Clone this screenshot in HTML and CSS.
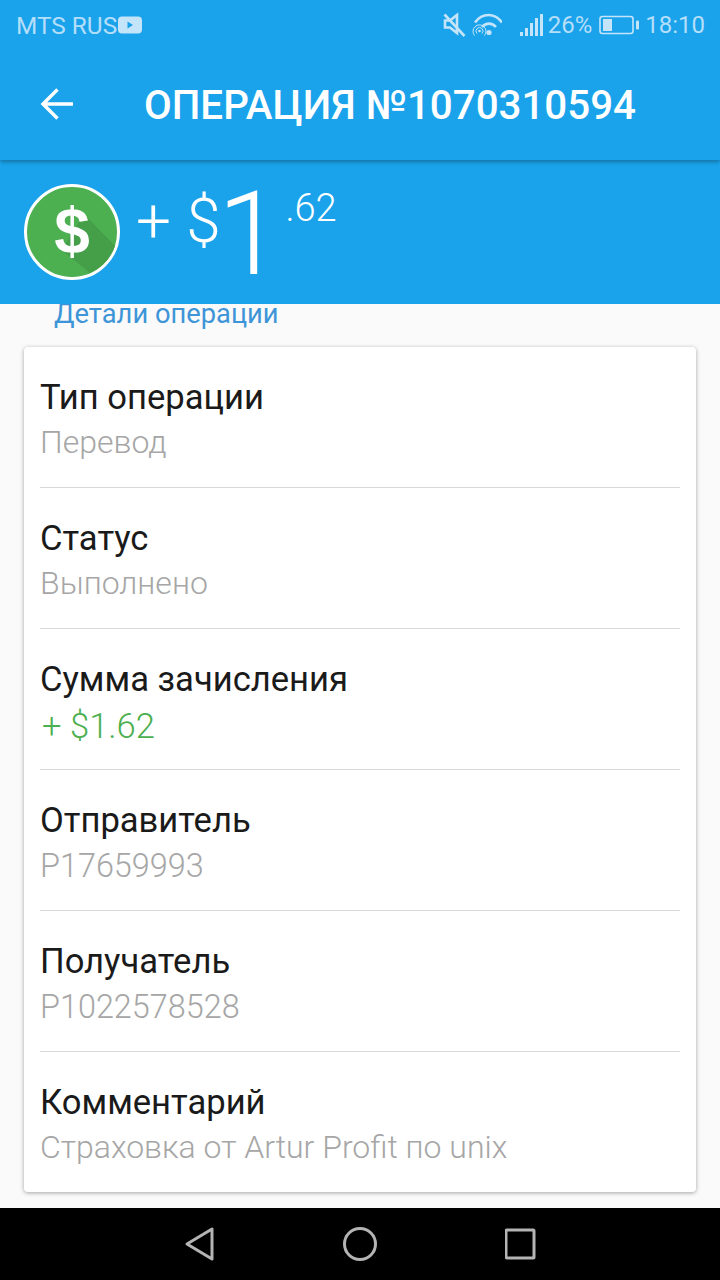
FILE: index.html
```html
<!DOCTYPE html>
<html lang="ru">
<head>
<meta charset="utf-8">
<title>Операция</title>
<link rel="stylesheet" href="styles.css">
</head>
<body>
<div class="screen">
  <header class="top">
    <div class="status">
      <div class="status-left">
        <span>MTS RUS</span>
        <svg class="yt" width="24" height="18" viewBox="0 0 24 18"><rect width="24" height="17" y="0.5" rx="4" fill="#c4e4f9"/><path d="M9.500 5.500l5.500 3.500-5.500 3.500z" fill="#1aa3eb"/></svg>
      </div>
      <div class="status-right">
        <svg class="ic-mute" width="24" height="26" viewBox="0 0 24 26" fill="none" stroke="#c4e4f9" stroke-width="2.600"><path d="M2 8.500h5l7-5.500v18l-7-5.500H2z"/><path d="M1.500 2.500l20 21.500"/></svg>
        <svg class="ic-wifi" width="30" height="24" viewBox="0 0 30 24" fill="none" stroke="#c4e4f9"><path d="M3 9.500C10 -.5 23 -.5 30 9.500" stroke-width="2.600"/><path d="M10 14c4-4.500 10-4.500 14 0" stroke-width="2.600"/><circle cx="17" cy="19.500" r="2.600" fill="#c4e4f9" stroke="none"/><path d="M2.500 22.500a6.500 6.500 0 1 1 10 0M5 20.500a3.500 3.500 0 1 1 5 0" stroke-width="1"/><circle cx="7.500" cy="18" r="1.300" fill="#c4e4f9" stroke="none"/></svg>
        <svg class="ic-signal" width="24" height="24" viewBox="0 0 24 24" fill="#c4e4f9"><rect x="0" y="19" width="3" height="4"/><rect x="5" y="15" width="3" height="8"/><rect x="10" y="10" width="3" height="13"/><rect x="15" y="5" width="3" height="18"/><rect x="20" y="1" width="3" height="22"/></svg>
        <span class="pct">26%</span>
        <svg class="ic-batt" width="40" height="20" viewBox="0 0 40 20"><rect x="1" y="1.500" width="33" height="17" rx="2.500" fill="none" stroke="#c4e4f9" stroke-width="1.600"/><rect x="4" y="4" width="9" height="12" fill="#c4e4f9"/><rect x="37" y="5.500" width="3" height="9" rx="1.200" fill="#c4e4f9"/></svg>
        <span class="time">18:10</span>
      </div>
    </div>
    <div class="toolbar">
      <svg class="back" width="34" height="32" viewBox="0 0 34 32" fill="none" stroke="#fff" stroke-width="3.400"><path d="M33 16H3M17.500 1.500L3 16l14.500 14.500"/></svg>
      <h1 class="title">ОПЕРАЦИЯ №1070310594</h1>
    </div>
  </header>
  <section class="amount">
    <svg class="coin" width="96" height="96" viewBox="0 0 96 96">
      <circle cx="48" cy="48" r="46.500" fill="#4caf50" stroke="#fff" stroke-width="3"/>
      <path d="M60 30L91 62A46 46 0 0 1 66 89L38 66z" fill="#459f49"/>
      <text x="48" y="69" class="coin-sign">$</text>
    </svg>
    <div class="sum">
      <span class="sum-main">+ $</span><span class="sum-big">1</span><span class="sum-cents">.62</span>
    </div>
  </section>
  <main class="content">
    <div class="section-title">Детали операции</div>
    <div class="card">
      <div class="row"><div class="label">Тип операции</div><div class="value">Перевод</div></div>
      <div class="row"><div class="label">Статус</div><div class="value">Выполнено</div></div>
      <div class="row"><div class="label">Сумма зачисления</div><div class="value value-green">+ $1.62</div></div>
      <div class="row"><div class="label">Отправитель</div><div class="value value-id">P17659993</div></div>
      <div class="row"><div class="label">Получатель</div><div class="value value-id">P1022578528</div></div>
      <div class="row"><div class="label">Комментарий</div><div class="value">Страховка от Artur Profit по unix</div></div>
    </div>
  </main>
  <nav class="navbar">
    <svg width="32" height="36" viewBox="0 0 32 36" fill="none" stroke="#b4b4b4" stroke-width="3" stroke-linejoin="round"><path d="M29 3v30L4 18z"/></svg>
    <svg width="36" height="36" viewBox="0 0 36 36" fill="none" stroke="#b4b4b4" stroke-width="3"><circle cx="18" cy="18" r="15.500"/></svg>
    <svg width="32" height="32" viewBox="0 0 32 32" fill="none" stroke="#b4b4b4" stroke-width="3" stroke-linejoin="round"><rect x="1" y="2" width="28" height="28" rx="1"/></svg>
  </nav>
</div>
</body>
</html>
```
FILE: styles.css
```css
* { box-sizing: border-box; }
html, body { margin: 0; padding: 0; }
body { font-family: Roboto, "Noto Sans", sans-serif; background: #fafafa; }
.screen { width: 720px; height: 1280px; display: flex; flex-direction: column; overflow: hidden; background: #fafafa; }
.top { height: 160px; background: #1aa3eb; box-shadow: 0 2px 4px rgba(0,0,0,.3); position: relative; z-index: 2; flex: none; }
.status { height: 50px; padding: 0 15px 0 16px; display: flex; justify-content: space-between; align-items: center; color: #b5defa; font-size: 24px; }
.status-left { display: flex; align-items: center; gap: 1px; font-size: 24.4px; }
.status-right { display: flex; align-items: center; }
.ic-mute { margin-right: 5px; }
.ic-wifi { margin-right: 18px; }
.ic-signal { margin-right: 4px; }
.pct { margin-right: 7px; }
.ic-batt { margin-right: 6px; }
.toolbar { height: 110px; padding: 0 0 0 40px; display: flex; align-items: center; }
.back { flex: none; margin-top: -2px; }
.title { margin: 0 0 0 70px; color: #fff; font-size: 40.3px; font-weight: 500; white-space: nowrap; }
.amount { height: 144px; background: #1aa3eb; padding: 24px 0 0 24px; display: flex; align-items: flex-start; flex: none; color: #fff; }
.coin { flex: none; }
.coin-sign { font-family: "Liberation Sans", sans-serif; font-size: 64px; font-weight: 700; fill: #fff; text-anchor: middle; }
.sum { margin-left: 16px; display: flex; align-items: flex-start; font-weight: 300; }
.sum-main { font-size: 62px; line-height: 70px; margin-top: 2px; white-space: pre; }
.sum-big { font-size: 117px; line-height: 117px; font-weight: 300; margin-top: -8px; margin-left: -3px; }
.sum-cents { font-size: 38px; line-height: 44px; margin-left: 3px; margin-top: 2px; }
.content { flex: 1; min-height: 0; padding: 0 24px; overflow: hidden; }
.section-title { height: 50px; margin-top: -6px; margin-bottom: -1px; padding-left: 30px; color: #3d95d8; font-size: 27.3px; line-height: 33px; }
.card { background: #fff; border-radius: 4px; box-shadow: 0 1px 4px rgba(0,0,0,.35); padding: 0 16px; height: 845px; }
.row { height: 141px; padding-top: 28px; border-bottom: 1px solid #d8d8d8; }
.row:last-child { border-bottom: 0; }
.label { font-size: 34.6px; line-height: 44px; color: #1a1a1a; font-weight: 400; }
.value { font-size: 32px; line-height: 46px; color: #a6a6a6; font-weight: 300; }
.value-id { font-size: 32.4px; padding-top: 1px; }
.value-green { color: #4caf50; font-size: 34.6px; padding-left: 2px; padding-top: 2px; }
.navbar { height: 72px; flex: none; background: #000; display: flex; justify-content: center; align-items: center; gap: 127px; }
```
